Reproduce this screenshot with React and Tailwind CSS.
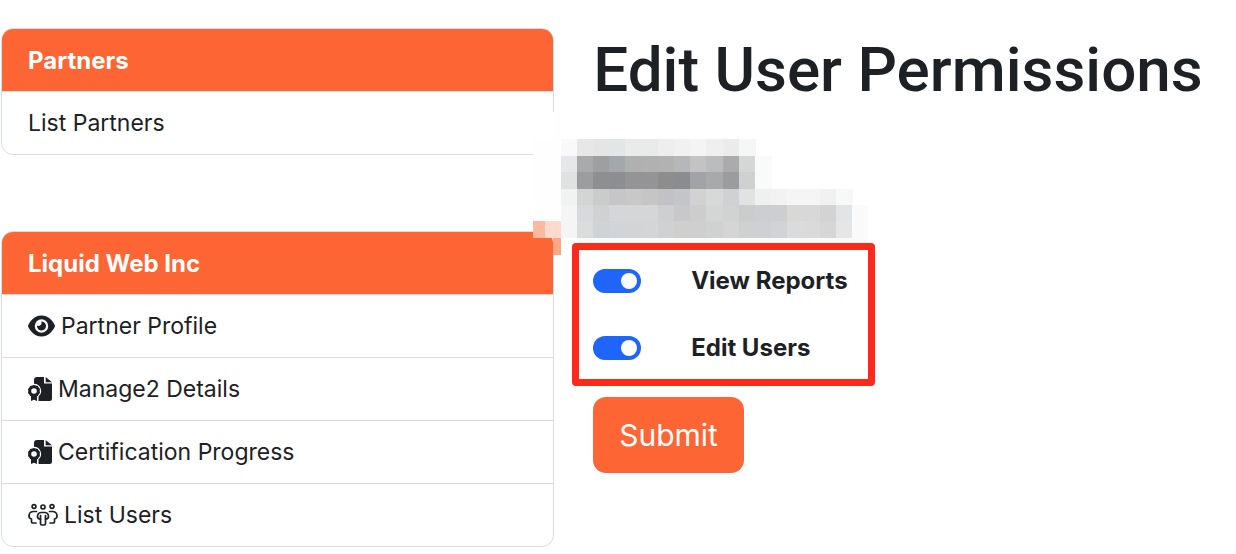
import { FaEye } from "react-icons/fa6";

const CertificateIcon = () => (
  <svg viewBox="0 0 24 24" className="h-6 w-6" fill="currentColor" aria-hidden="true">
    <path d="M6 3Q6 0 9 0H16V6.500H24V21.500Q24 24 21.500 24H10.500V19.500A7.200 7.200 0 0 0 6 6.800Z" />
    <path d="M17.700 0L24 5.200H17.700Z" />
    <path
      fillRule="evenodd"
      d="M6 8L7.800 8.500L9.800 8.900L10.700 10.500L12 12L11.700 14L12 16L10.700 17.400L9.800 19L9 19.300V24L6 22.700L3 24V19.300L2.200 19L1.300 17.400L0 16L.3 14L0 12L1.300 10.500L2.200 8.900L4.200 8.500ZM6 11.200A2.800 2.800 0 1 0 6 16.800A2.800 2.800 0 1 0 6 11.200Z"
    />
  </svg>
);

const PeopleIcon = () => (
  <svg
    viewBox="0 0 30 24"
    className="h-6 w-[30px]"
    fill="none"
    stroke="currentColor"
    strokeWidth="1.700"
    strokeLinecap="round"
    strokeLinejoin="round"
    aria-hidden="true"
  >
    <circle cx="6" cy="3.500" r="1.900" />
    <circle cx="15" cy="4" r="2" />
    <circle cx="24" cy="3.500" r="1.900" />
    <path d="M8.500 8.500H5Q1 9 1 13Q1 15.500 3.500 16V19Q3.500 20 5 20H8" />
    <path d="M21.500 8.500H25Q29 9 29 13Q29 15.500 26.500 16V19Q26.500 20 25 20H22" />
    <path d="M13 9.500H17Q20.500 10 20.500 13.500Q20.500 16 17.500 16V20.500Q17.500 22 16 22H14Q12.500 22 12.500 20.500V16Q9.500 16 9.500 13.500Q9.500 10 13 9.500Z" />
    <path d="M12.500 12.500V16M17.500 12.500V16" />
  </svg>
);

const menus = [
  {
    title: "Partners",
    items: [{ name: "List Partners" }],
  },
  {
    title: "Liquid Web Inc",
    items: [
      { name: "Partner Profile", icon: <FaEye className="h-6 w-[27px]" /> },
      { name: "Manage2 Details", icon: <CertificateIcon /> },
      { name: "Certification Progress", icon: <CertificateIcon /> },
      { name: "List Users", icon: <PeopleIcon /> },
    ],
  },
];

const permissions = [
  { id: "view-reports", label: "View Reports" },
  { id: "edit-users", label: "Edit Users" },
];

// Each row is a strip of 16px blocks, starting at the same left edge.
const mosaicRows = [
  { y: 27, colors: "f9f9f9 e7e7e7 e5e5e5 e3e6e6 e9ebea e9ebea eeeeee f1f1f1 f4f4f4 efefef ebebeb f6f6f6" },
  { y: 44, colors: "e5e7ea a9aaac 9f9fa1 a3a8ac b0b0b0 b1b1b2 b2b2b3 b6b7b8 c3c3c3 bbbcbe ababac d5d7d6 fafafa" },
  { y: 60, colors: "e0e2e1 9c9d9e 8f8f91 8d8e92 949496 949496 8d8d8e 8b8c90 a2a3a8 a8a9aa 9b9c9d cfd1d0 fafafa" },
  { y: 77, colors: "f1f3f2 d3d5d4 cbcbcb c6c6c9 c9c8c8 c5c5c6 c2c2c6 c4c5c8 d2d2d2 d7d9d8 d0d1d4 e1e3e2 f0f0f0 f2f2f2 f5f5f5 f5f5f5 f1f1f1 f8f8f8" },
  { y: 93, colors: "f5f5f5 d8d9dc d1d1d4 d5d6d9 d5d6d8 d5d6d7 cfcfd2 c8c8cb cdcdcd d4d6d5 d2d2d2 cbcdcc cdced1 ceced1 d8d9d7 d8d8d8 d3d3d3 e2e4e7 fafafa" },
  { y: 109, colors: "f5f5f5 dadddb cfd3d8 d1d5da d2d4d6 d3d5d6 d0d1d3 cfcfce cecfce d0d2d1 d5d5d5 cfd1d0 cfd0d3 d2d3d6 dadcdb dadada d6d6d6 e6e6e6 fafafa" },
];

const Mosaic = () => (
  <svg viewBox="0 0 335 143" className="absolute -left-[60px] top-0 h-[143px] w-[335px]" shapeRendering="crispEdges" aria-hidden="true">
    <rect y="27" width="28" height="82" fill="#fefefe" />
    <rect x="20" width="8" height="27" fill="#fefefe" />
    <rect y="109" width="12" height="17" fill="#fcb9a0" />
    <rect x="12" y="109" width="16" height="17" fill="#fed9cc" />
    <rect x="20" y="126" width="8" height="17" fill="#fba785" />
    <rect x="44" y="126" width="291" height="6" fill="#fafafa" />
    {mosaicRows.map((row) =>
      row.colors.split(" ").map((color, index) => (
        <rect
          key={`${row.y}-${index}`}
          x={Math.round(27.8 + index * 16.17)}
          y={row.y}
          width="17"
          height="17"
          fill={`#${color}`}
        />
      ))
    )}
  </svg>
);

const MenuCard = ({ title, items }) => (
  <nav
    aria-label={title}
    className="divide-y divide-[#d9dde1] overflow-hidden rounded-xl border border-[#d9dde1]"
  >
    <h2 className="bg-[#fd6534] px-[26px] pt-3.5 pb-3 text-2xl leading-9 font-bold text-white">{title}</h2>
    {items.map((item) => (
      <a key={item.name} href="#" className="flex items-center gap-1.5 px-[26px] py-[13px] text-[23px] leading-9">
        {item.icon}
        {item.name}
      </a>
    ))}
  </nav>
);

export default function App() {
  return (
    <div className="flex bg-white pt-7 font-['Inter',sans-serif] text-[#1d2125]">
      <aside className="flex w-[45%] shrink-0 flex-col gap-[76px] pr-0.5 pl-px">
        {menus.map((menu) => (
          <MenuCard key={menu.title} {...menu} />
        ))}
      </aside>

      <main className="min-w-0 flex-1 pl-[37px]">
        <h1 className="h-[84px] font-['Roboto',sans-serif] text-[62px] leading-[84px] font-medium whitespace-nowrap">
          Edit User Permissions
        </h1>

        <div className="relative h-[131px]">
          <Mosaic />
        </div>

        <form onSubmit={(event) => event.preventDefault()}>
          <div className="relative -ml-[21px] flex w-[303px] flex-col gap-[31px] rounded-[4px] border-[7px] border-[#ff291b] bg-white py-[13px] pl-3.5">
            {permissions.map((permission) => (
              <div key={permission.id} className="flex items-center gap-[50px]">
                <input
                  id={permission.id}
                  type="checkbox"
                  role="switch"
                  defaultChecked
                  className="flex h-6 w-12 shrink-0 appearance-none items-center rounded-full bg-gray-300 px-1 before:h-4 before:w-4 before:rounded-full before:bg-white checked:justify-end checked:bg-[#1f65fa]"
                />
                <label htmlFor={permission.id} className="text-2xl leading-9 font-bold whitespace-nowrap">
                  {permission.label}
                </label>
              </div>
            ))}
          </div>

          <button type="submit" className="mt-[11px] rounded-[13px] bg-[#fd6534] px-[26px] py-3.5 text-[30px] leading-[48px] text-white">
            Submit
          </button>
        </form>
      </main>
    </div>
  );
}
